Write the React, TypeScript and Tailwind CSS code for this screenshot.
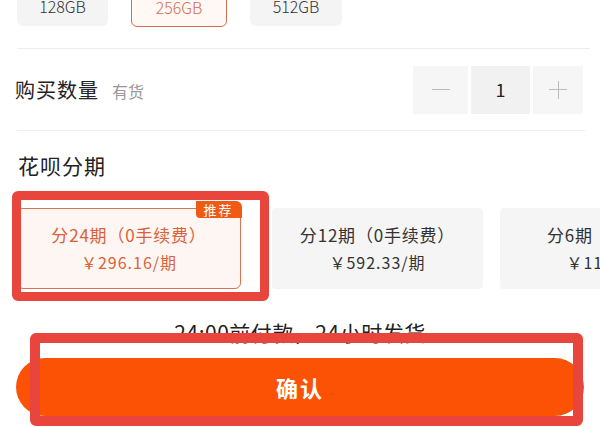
import React from 'react';

const font = { fontFamily: '"Noto Sans CJK SC", "Noto Sans", sans-serif' };

const plans = [
  { label: '分24期（0手续费）', price: '￥296.16/期', active: true },
  { label: '分12期（0手续费）', price: '￥592.33/期', active: false },
  { label: '分6期（0手续费）', price: '￥1184.66/期', active: false },
];

export default function App() {
  return (
    <div className="relative w-[600px] h-[427px] overflow-hidden bg-white" style={font}>
      {/* storage chips */}
      <div className="flex gap-[23px] pl-[17px] -mt-[14px]">
        <div className="w-[91px] h-[40px] rounded-md bg-[#f4f4f4] flex items-center justify-center text-[16px] text-[#333] font-light">128GB</div>
        <div className="w-[96px] h-[41px] rounded-md border-[1.5px] border-[#d4704f] bg-[#fff8f5] flex items-center justify-center text-[16px] text-[#d4704f] font-light">256GB</div>
        <div className="w-[92px] h-[40px] rounded-md bg-[#f4f4f4] flex items-center justify-center text-[16px] text-[#333] font-light">512GB</div>
      </div>

      <div className="mt-[21px] ml-[17px] mr-[10px] h-px bg-[#eeeeee]" />

      {/* quantity */}
      <div className="h-[81px] flex items-center justify-between pl-[15px] pr-[17px]">
        <div className="flex items-baseline gap-[13px]">
          <span className="text-[20px] text-[#222] tracking-[1px]">购买数量</span>
          <span className="text-[16px] text-[#999]">有货</span>
        </div>
        <div className="flex gap-[3px] h-[48px]">
          <div className="w-[55px] bg-[#f6f6f6] flex items-center justify-center">
            <div className="w-[18px] h-px bg-[#bbbbbb]" />
          </div>
          <div className="w-[59px] bg-[#f1f1f1] flex items-center justify-center text-[18px] text-[#222]">1</div>
          <div className="w-[50px] bg-[#f6f6f6] flex items-center justify-center relative">
            <div className="w-[18px] h-px bg-[#bbbbbb]" />
            <div className="absolute w-px h-[18px] bg-[#bbbbbb]" />
          </div>
        </div>
      </div>

      <div className="ml-[17px] mr-[15px] h-px bg-[#eeeeee]" />

      {/* instalments */}
      <div className="mt-[20px] pl-[18px] text-[21px] leading-[28px] text-[#222] tracking-[1px]">花呗分期</div>

      <div className="mt-[29px] flex pl-[17px] gap-[31px] h-[81px]">
        {plans.map((p, i) => (
          <div
            key={i}
            className={
              p.active
                ? 'relative shrink-0 w-[224px] rounded-md border-[1.5px] border-[#d77252] bg-[#fdf6f3] flex flex-col items-center justify-center gap-[7px] text-[#d9623a]'
                : i === 2
                ? 'shrink-0 w-[211px] -ml-[14px] pl-[28px] rounded bg-[#f5f5f5] flex flex-col items-center justify-center gap-[7px] text-[#333]'
                : 'shrink-0 w-[211px] rounded bg-[#f5f5f5] flex flex-col items-center justify-center gap-[7px] text-[#333]'
            }
          >
            {p.active && (
              <div className="absolute -top-[8px] -right-[1.5px] w-[46px] h-[17px] bg-[#f05a14] rounded-tr-md rounded-bl-sm text-white text-[13px] leading-[17px] text-center tracking-[2px]">
                推荐
              </div>
            )}
            <div className="text-[17px] leading-[20px] tracking-[0.8px] whitespace-nowrap">{p.label}</div>
            <div className="text-[16px] leading-[20px] tracking-[1px] whitespace-nowrap">{p.price}</div>
          </div>
        ))}
      </div>

      <div className="mt-[33px] text-center text-[21px] leading-[20px] text-[#222] tracking-[0.5px]">24:00前付款，24小时发货</div>

      {/* confirm */}
      <div className="mt-[16px] mx-[16px] h-[58px] rounded-full bg-[#fc5206] flex items-center justify-center text-white text-[22px] font-bold tracking-[2px]">
        确认
      </div>

      {/* annotation boxes */}
      <div className="absolute left-[12px] top-[191px] w-[257px] h-[110px] border-[9px] border-[#e8453c] rounded-md pointer-events-none" />
      <div className="absolute left-[30px] top-[333px] w-[553px] h-[93px] border-[10px] border-[#e8453c] rounded-md pointer-events-none" />
    </div>
  );
}
